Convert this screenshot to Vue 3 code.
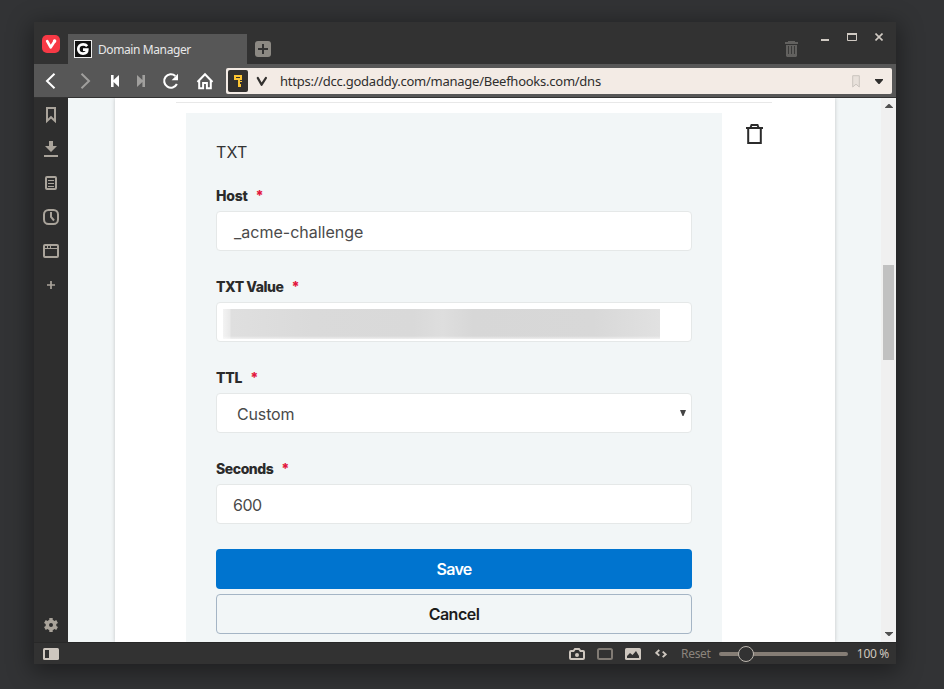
<script setup>
import { ref } from 'vue'

const fields = ref([
  { id: 'host', label: 'Host', value: '_acme-challenge', kind: 'text' },
  { id: 'value', label: 'TXT Value', value: '', kind: 'redacted' },
  { id: 'ttl', label: 'TTL', value: 'Custom', kind: 'select' },
  { id: 'seconds', label: 'Seconds', value: '600', kind: 'text' },
])
</script>

<template>
  <div class="desktop">
    <div class="window">
      <header class="tabbar">
        <div class="brand">
          <svg width="18" height="18" viewBox="0 0 18 18">
            <rect width="18" height="18" rx="5" fill="#f73945" />
            <path d="M5.2 6.1 8.7 12.3 12.6 6.2" fill="none" stroke="#fff" stroke-width="2.7" stroke-linecap="round" stroke-linejoin="round" />
            <circle cx="12.6" cy="6.1" r="1.8" fill="#fff" />
          </svg>
        </div>
        <div class="tab">
          <svg width="18" height="18" viewBox="0 0 18 18">
            <rect x=".5" y=".5" width="17" height="17" fill="#111" stroke="#eee" />
            <path d="M13.2 6.2C12.2 5 10.8 4.4 9.1 4.4 6.2 4.4 4.3 6.4 4.3 9s1.9 4.6 4.7 4.6c2.7 0 4.3-1.6 4.3-4H9" fill="none" stroke="#fff" stroke-width="2.7" />
          </svg>
          <span class="tab-title">Domain Manager</span>
        </div>
        <svg class="newtab" width="16" height="16" viewBox="0 0 16 16">
          <rect width="16" height="16" rx="3" fill="#8c8983" />
          <path d="M8 3v10M3 8h10" stroke="#323232" stroke-width="2" />
        </svg>
        <div class="controls">
          <svg class="closed-tabs" width="13" height="16" viewBox="0 0 13 16">
            <path d="M0 1h3V0h7v1h3v2H0zM1 4h11v11l-1 1H2l-1-1z" fill="#62615f" />
            <path d="M3.5 5v8M6.5 5v8M9.5 5v8" stroke="#3a3a39" />
          </svg>
          <svg class="min" width="8" height="2"><rect width="8" height="2" fill="#d0cac3" /></svg>
          <svg class="max" width="10" height="8"><path d="M.5 1v6.5h9V1" fill="none" stroke="#d0cac3" /><path d="M0 1h10" stroke="#d0cac3" stroke-width="2" /></svg>
          <svg class="close" width="8" height="8"><path d="M.5.5l7 7M7.5.5l-7 7" stroke="#d0cac3" stroke-width="1.6" /></svg>
        </div>
      </header>

      <nav class="toolbar">
        <svg class="nav back" width="34" height="34" viewBox="0 0 34 34"><path d="M20.5 9.7 13 17l7.5 7.3" fill="none" stroke="#fff" stroke-width="2" /></svg>
        <svg class="nav" width="34" height="34" viewBox="0 0 34 34"><path d="M13.5 9.7 21 17l-7.5 7.3" fill="none" stroke="#a09f9d" stroke-width="2" /></svg>
        <svg class="nav" width="26" height="34" viewBox="0 0 26 34"><path d="M9 11h2.6v5L17 11v12l-5.4-5v5H9z" fill="#fff" /></svg>
        <svg class="nav" width="26" height="34" viewBox="0 0 26 34"><path d="M17 11h-2.6v5L9 11v12l5.4-5v5H17z" fill="#a09f9d" /></svg>
        <svg class="nav" width="34" height="34" viewBox="0 0 34 34"><path d="M21.4 12A6.7 6.7 0 1 0 22.9 20" fill="none" stroke="#fff" stroke-width="2.1" /><path d="M24 9.8v6.4h-6.4z" fill="#fff" /></svg>
        <svg class="nav" width="34" height="34" viewBox="0 0 34 34"><path d="m9.5 18 7.5-7.8 7.5 7.8" fill="none" stroke="#fff" stroke-width="2" /><path d="M11.2 17v7.2h3.9v-5.1h3.8v5.1h3.9V17" fill="none" stroke="#fff" stroke-width="2" /></svg>
        <div class="address">
          <span class="key">
            <svg width="10" height="12" viewBox="0 0 10 12"><path d="M1 0h8v5H7v1h2v1H7v2h1v3H5V5H1z" fill="#fdc533" /><path d="M3 2.5h4" stroke="#33312f" /></svg>
          </span>
          <svg class="v-mark" width="12" height="11" viewBox="0 0 12 11"><path d="M1.8 2 5.6 8.7 9.9 2" fill="none" stroke="#33312f" stroke-width="2.3" stroke-linecap="round" stroke-linejoin="round" /></svg>
          <span class="url">https://dcc.godaddy.com/manage/Beefhooks.com/dns</span>
          <svg class="mark" width="8" height="13" viewBox="0 0 8 13"><path d="M.7.7h6.6V12L4 9.2.7 12z" fill="#e8e1db" stroke="#cac4be" /></svg>
          <svg class="drop" width="8" height="5" viewBox="0 0 8 5"><path d="M0 0h8v1L4.5 5h-1L0 1z" fill="#2f2e2d" /></svg>
        </div>
      </nav>

      <div class="middle">
        <aside class="panelbar">
          <svg width="34" height="34" viewBox="0 0 34 34"><path d="M13 10h8v13l-4-3.8-4 3.8z" fill="none" stroke="#aaa49b" stroke-width="2" /></svg>
          <svg width="34" height="34" viewBox="0 0 34 34"><path d="M15 9h4v5h4l-6 6-6-6h4zM10 23h14v2H10z" fill="#aaa49b" /></svg>
          <svg width="34" height="34" viewBox="0 0 34 34"><rect x="12" y="11" width="10" height="12" rx="1" fill="none" stroke="#aaa49b" stroke-width="2" /><path d="M14 14.5h6M14 17.5h6M14 20.5h6" stroke="#aaa49b" /></svg>
          <svg width="34" height="34" viewBox="0 0 34 34"><rect x="10" y="10" width="14" height="14" rx="4.5" fill="none" stroke="#aaa49b" stroke-width="2" /><path d="M17 12v5l3 3.5" fill="none" stroke="#aaa49b" stroke-width="2" /></svg>
          <svg width="34" height="34" viewBox="0 0 34 34"><rect x="10" y="11" width="14" height="12" rx="1" fill="none" stroke="#aaa49b" stroke-width="2" /><path d="M10 14.5h14M13.5 11v3M16.5 11v3" stroke="#aaa49b" /></svg>
          <svg width="34" height="34" viewBox="0 0 34 34"><path d="M17 13v8M13 17h8" stroke="#aaa49b" stroke-width="1.7" /></svg>
          <svg class="gear" width="34" height="34" viewBox="0 0 34 34"><circle cx="17" cy="17" r="3.7" fill="none" stroke="#aaa49b" stroke-width="3.4" /><path d="M17 10v3M17 21v3M10.9 13.5l2.6 1.5M20.5 19l2.6 1.5M10.9 20.5l2.6-1.5M20.5 15l2.6-1.5" stroke="#aaa49b" stroke-width="3.4" /></svg>
        </aside>

        <main class="viewport">
          <section class="sheet">
            <div class="rule"></div>
            <div class="record">
              <form class="card" @submit.prevent>
                <h2 class="record-type">TXT</h2>
                <div v-for="f in fields" :key="f.id" class="field" :class="f.id">
                  <div class="label"><span class="label-text">{{ f.label }}</span><span class="star">*</span></div>
                  <div class="control">
                    <div v-if="f.kind === 'redacted'" class="redacted"></div>
                    <span v-else class="text">{{ f.value }}</span>
                    <svg v-if="f.kind === 'select'" class="arrow" width="6" height="6" viewBox="0 0 6 6"><path d="M0 0h6L3.5 6h-1z" fill="#444" /></svg>
                  </div>
                </div>
                <button class="btn save" type="submit"><span>Save</span></button>
                <button class="btn cancel" type="button"><span>Cancel</span></button>
              </form>
              <svg class="trash" width="17" height="21" viewBox="0 0 17 21"><path d="M2.2 4v15h12.6V4" fill="none" stroke="#2b2b2b" stroke-width="2" /><path d="M0 4h17M4.5 3.5 5.5 1h6l1 2.5" fill="none" stroke="#2b2b2b" stroke-width="2" /></svg>
            </div>
          </section>
        </main>

        <div class="scrollbar">
          <svg width="8" height="4" viewBox="0 0 8 4"><path d="M0 4V3.4L3.5 0h1L8 3.4V4z" fill="#505050" /></svg>
          <div class="thumb"></div>
          <svg class="down" width="8" height="4" viewBox="0 0 8 4"><path d="M0 0v.6L3.5 4h1L8 .6V0z" fill="#505050" /></svg>
        </div>
      </div>

      <footer class="status">
        <svg width="16" height="12" viewBox="0 0 16 12"><rect width="16" height="12" rx="1.5" fill="#cec7bf" /><path d="M2 2h4v8H2z" fill="#323232" /></svg>
        <svg class="camera" width="16" height="12" viewBox="0 0 16 12"><path d="M2 3h2.5L6 1h4l1.5 2H14a1 1 0 0 1 1 1v6a1 1 0 0 1-1 1H2a1 1 0 0 1-1-1V4a1 1 0 0 1 1-1z" fill="none" stroke="#cec7bf" stroke-width="2" /><circle cx="8" cy="7" r="2" fill="#cec7bf" /></svg>
        <svg class="tile" width="16" height="12" viewBox="0 0 16 12"><rect x="1" y="1" width="14" height="10" rx="1.5" fill="none" stroke="#817b74" stroke-width="2" /></svg>
        <svg class="image" width="16" height="12" viewBox="0 0 16 12"><rect width="16" height="12" rx="1.5" fill="#cec7bf" /><path d="M2 10V8l3-3 2.5 2L11 3l3 5v2z" fill="#323232" /></svg>
        <svg class="code" width="12" height="9" viewBox="0 0 12 9"><path d="M4.3 1 1.3 3.8l3 2.8M7.7 2.6l3 2.7-3 2.8" fill="none" stroke="#cec7bf" stroke-width="1.9" /></svg>
        <span class="reset">Reset</span>
        <svg class="slider" width="129" height="16" viewBox="0 0 129 16"><path d="M2 8h125" stroke="#857d75" stroke-width="4" stroke-linecap="round" /><circle cx="27" cy="8" r="7.5" fill="#323232" stroke="#bdb7af" /></svg>
        <span class="zoom">100 %</span>
      </footer>
    </div>
  </div>
</template>

<style>
body { margin: 0; background: #323335; }
</style>

<style scoped>
.desktop { box-sizing: border-box; width: 944px; height: 689px; padding: 22px 48px 25px 34px; background: #323335; overflow: hidden; font-family: "Noto Sans", sans-serif; }
.desktop svg { display: block; flex: none; }
.window { width: 862px; height: 642px; display: flex; flex-direction: column; background: #323232; box-shadow: 0 5px 22px 3px rgba(0, 0, 0, .4); }
.tabbar { height: 42px; display: flex; align-items: flex-start; }
.brand { width: 34px; padding: 13px 0 0 8px; box-sizing: border-box; }
.tab { width: 179px; height: 30px; margin-top: 12px; box-sizing: border-box; padding-left: 6px; background: #575757; display: flex; align-items: center; gap: 6px; }
.tab-title { margin-top: 1px; color: #e8e8e8; font-size: 12px; letter-spacing: -.4px; line-height: 18px; white-space: nowrap; }
.newtab { margin: 19px 0 0 8px; }
.controls { margin-left: auto; display: flex; align-items: flex-start; padding-right: 13px; }
.closed-tabs { margin: 19px 23px 0 0; }
.min { margin: 17px 18px 0 0; }
.max { margin: 11px 18px 0 0; }
.close { margin-top: 11px; }
.toolbar { height: 34px; box-sizing: border-box; border-bottom: 1px solid #323232; background: #575757; display: flex; align-items: flex-start; }
.address { margin: 4px 4px 0 4px; flex: 1; height: 26px; box-sizing: border-box; border-radius: 2px; background: #f3ebe5; display: flex; align-items: center; padding: 0 9px 0 2px; }
.key { width: 20px; height: 22px; border-radius: 2px; background: #33312f; display: flex; align-items: center; justify-content: center; }
.v-mark { margin-left: 8px; }
.url { margin-left: 12px; font-size: 13px; letter-spacing: -.25px; line-height: 20px; color: #2f2e2d; white-space: nowrap; }
.mark { margin-left: auto; }
.drop { margin-left: 15px; }
.middle { height: 544px; display: flex; }
.panelbar { width: 34px; display: flex; flex-direction: column; background: #2e2e2e; }
.gear { margin-top: auto; }
.viewport { width: 813px; display: flex; padding-left: 47px; box-sizing: border-box; background: #f2f6f7; overflow: hidden; }
.sheet { width: 720px; height: 544px; box-sizing: border-box; background: #fff; box-shadow: 0 0 4px rgba(0, 0, 0, .2); padding: 4px 0 0 61px; }
.rule { width: 596px; height: 1px; background: #e8e8e8; }
.record { display: flex; align-items: flex-start; padding: 10px 0 0 10px; font-family: Inter, sans-serif; }
.card { width: 536px; height: 529px; box-sizing: border-box; padding: 29px 30px 0; background: #f2f6f7; }
.record-type { margin: 0 0 19px; height: 20px; line-height: 20px; font-size: 16px; font-weight: 400; letter-spacing: .2px; color: #333; }
.trash { margin: 11px 0 0 24px; }
.field { margin-bottom: 21px; }
.field.seconds { margin-bottom: 25px; }
.label { display: flex; height: 30px; line-height: 30px; font-size: 14px; font-weight: 800; letter-spacing: -.25px; color: #2b2b2b; }
.value .label, .seconds .label { letter-spacing: -.45px; }
.star { color: #e3173e; margin-left: 8px; }
.control { height: 40px; box-sizing: border-box; border: 1px solid #e5e8e8; border-radius: 4px; background: #fff; display: flex; align-items: center; padding: 2px 5px 0 17px; font-size: 16px; color: #4a4a4a; }
.ttl .control { padding-left: 20px; }
.ttl .text { letter-spacing: -.15px; }
.seconds .control { padding-left: 16px; }
.seconds .text { letter-spacing: -.5px; }
.arrow { margin: -2px 0 0 auto; }
.value .control { padding: 3px 0 0 6px; }
.redacted { width: 437px; height: 30px; background: linear-gradient(0deg, rgba(255, 255, 255, .55) 0, rgba(255, 255, 255, 0) 3px), linear-gradient(90deg, #f3f3f3 0, #e9e9e9 7px, #dfdfdf 8px, #dadada 90px, #d9d9d9 190px, #dedede 220px, #d7d7d7 250px, #d8d8d8 370px, #e1e1e1 437px); }
.btn { display: flex; align-items: center; justify-content: center; width: 476px; height: 40px; box-sizing: border-box; border-radius: 4px; margin: 0 0 5px; padding: 0; font: 600 16px Inter, sans-serif; letter-spacing: -.5px; }
.save { border: 0; background: #0074cf; color: #fff; letter-spacing: -.7px; }
.cancel { border: 1px solid #a5b5c5; background: #f2f6f7; color: #1c1c1c; }
.scrollbar { width: 15px; box-sizing: border-box; padding: 6px 2px; background: #f0f0f0; display: flex; flex-direction: column; align-items: center; }
.thumb { width: 11px; height: 95px; margin-top: 157px; background: #c1c1c1; }
.down { margin-top: auto; }
.status { height: 22px; box-sizing: border-box; border-top: 1px solid #282828; display: flex; align-items: center; padding: 0 7px 0 9px; font-size: 12px; }
.camera { margin-left: 510px; }
.tile { margin-left: 12px; }
.image { margin-left: 12px; }
.code { margin-left: 14px; }
.reset { width: 30px; margin-left: 14px; color: #8b847c; letter-spacing: -.3px; white-space: nowrap; }
.slider { margin-left: 8px; }
.zoom { margin-left: 9px; color: #cec7bf; letter-spacing: -.3px; white-space: nowrap; }
</style>
